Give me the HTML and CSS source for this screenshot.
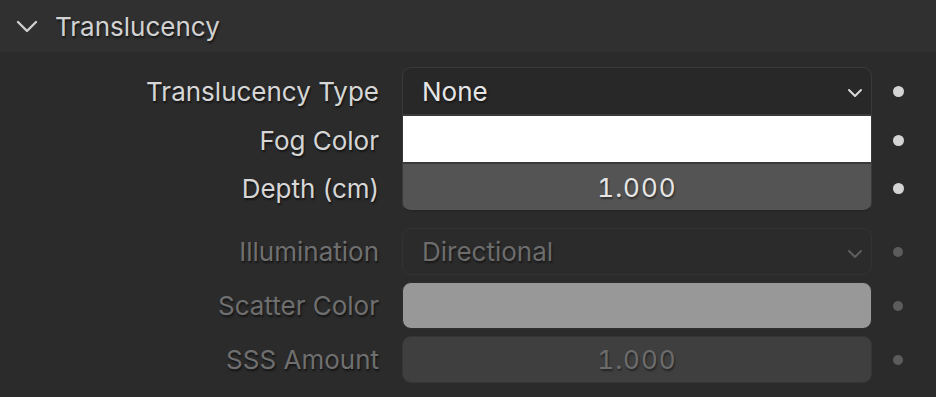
FILE: index.html
```html
<!DOCTYPE html>
<html>
<head>
<meta charset="utf-8">
<link rel="stylesheet" href="styles.css">
</head>
<body>
<div class="panel">
  <div class="header">
    <svg class="hchev" width="22" height="14" viewBox="0 0 22 14"><path d="M2 2 L11 11 L20 2" fill="none" stroke="#cfcfcf" stroke-width="2.4" stroke-linecap="round" stroke-linejoin="round"/></svg>
    <span class="htitle">Translucency</span>
  </div>
  <div class="body">
    <div class="group">
      <div class="row r1a">
        <div class="label">Translucency Type</div>
        <div class="w dropdown top">
          <span class="wtext">None</span>
          <svg class="dchev" width="16" height="10" viewBox="0 0 16 10"><path d="M2 2 L8 8 L14 2" fill="none" stroke="#d8d8d8" stroke-width="2" stroke-linecap="round" stroke-linejoin="round"/></svg>
        </div>
        <div class="dotcell"><span class="dot"></span></div>
      </div>
      <div class="row r1">
        <div class="label">Fog Color</div>
        <div class="w color mid"></div>
        <div class="dotcell"><span class="dot"></span></div>
      </div>
      <div class="row r1">
        <div class="label">Depth (cm)</div>
        <div class="w number bottom"><span class="wtext center">1.000</span></div>
        <div class="dotcell"><span class="dot"></span></div>
      </div>
    </div>
    <div class="group dis">
      <div class="row r2">
        <div class="label">Illumination</div>
        <div class="w dropdown single">
          <span class="wtext">Directional</span>
          <svg class="dchev" width="16" height="10" viewBox="0 0 16 10"><path d="M2 2 L8 8 L14 2" fill="none" stroke="#5e5e5e" stroke-width="2" stroke-linecap="round" stroke-linejoin="round"/></svg>
        </div>
        <div class="dotcell"><span class="dot"></span></div>
      </div>
      <div class="row r2">
        <div class="label">Scatter Color</div>
        <div class="w color single"></div>
        <div class="dotcell"><span class="dot"></span></div>
      </div>
      <div class="row r2">
        <div class="label">SSS Amount</div>
        <div class="w number single"><span class="wtext center">1.000</span></div>
        <div class="dotcell"><span class="dot"></span></div>
      </div>
    </div>
  </div>
</div>
</body>
</html>
```

FILE: styles.css
```css
html, body {
  margin: 0;
  padding: 0;
  background: #2b2b2b;
}
body {
  width: 936px;
  height: 397px;
  overflow: hidden;
  font-family: Inter, "Noto Sans", sans-serif;
}
.panel {
  display: flex;
  flex-direction: column;
}
.header {
  height: 53px;
  background: #303030;
  display: flex;
  align-items: center;
  box-sizing: border-box;
  padding-left: 16px;
  border-bottom: 1px solid #2a2a2a;
}
.hchev {
  margin-right: 17px;
  margin-top: 1px;
}
.htitle {
  color: #d2d2d2;
  font-size: 26px;
  text-shadow: 1px 2px 2px rgba(0,0,0,0.55);
}
.body {
  padding-top: 14px;
  display: flex;
  flex-direction: column;
  gap: 16px;
}
.group {
  display: flex;
  flex-direction: column;
}
.group.dis {
  gap: 7px;
}
.row {
  display: grid;
  grid-template-columns: 402px 470px 52px;
  align-items: stretch;
}
.r1a { height: 49px; }
.r1 { height: 48px; }
.r2 { height: 47px; }
.label {
  box-sizing: border-box;
  padding-right: 23px;
  text-align: right;
  font-size: 26px;
  color: #d6d6d6;
  text-shadow: 1px 2px 2px rgba(0,0,0,0.55);
  display: flex;
  align-items: center;
  justify-content: flex-end;
}
.w {
  box-sizing: border-box;
  display: flex;
  align-items: center;
  position: relative;
  border: 1px solid #3a3a3a;
}
.wtext {
  font-size: 26px;
  color: #e6e6e6;
  padding-left: 19px;
  text-shadow: 1px 2px 2px rgba(0,0,0,0.45);
}
.wtext.center {
  padding-left: 0;
  width: 100%;
  text-align: center;
  font-variant-numeric: tabular-nums;
  letter-spacing: 1px;
}
.dropdown {
  background: #282828;
}
.dchev {
  position: absolute;
  right: 8px;
  top: 50%;
  margin-top: -3px;
}
.color {
  background: #ffffff;
}
.number {
  background: #545454;
}
.top {
  border-radius: 9px 9px 0 0;
  border-bottom: 2px solid #3a3a3a;
}
.mid {
  border-top: none;
  border-bottom: 2px solid #3a3a3a;
}
.bottom {
  border-top: none;
  border-radius: 0 0 9px 9px;
  border-bottom: 2px solid #262626;
}
.single {
  border-radius: 9px;
}
.dotcell {
  display: flex;
  align-items: center;
  justify-content: center;
}
.dot {
  width: 11px;
  height: 11px;
  border-radius: 50%;
  background: #d4d4d4;
}
.dis .label {
  color: #6f6f6f;
}
.dis .wtext {
  color: #6c6c6c;
}
.dis .dropdown {
  background: #2b2b2b;
  border-color: #333333;
}
.dis .color {
  background: #989898;
  border-color: #2e2e2e;
}
.dis .number {
  background: #3f3f3f;
  border-color: #363636;
}
.dis .dot {
  background: #5c5c5c;
  width: 10px;
  height: 10px;
}
```
